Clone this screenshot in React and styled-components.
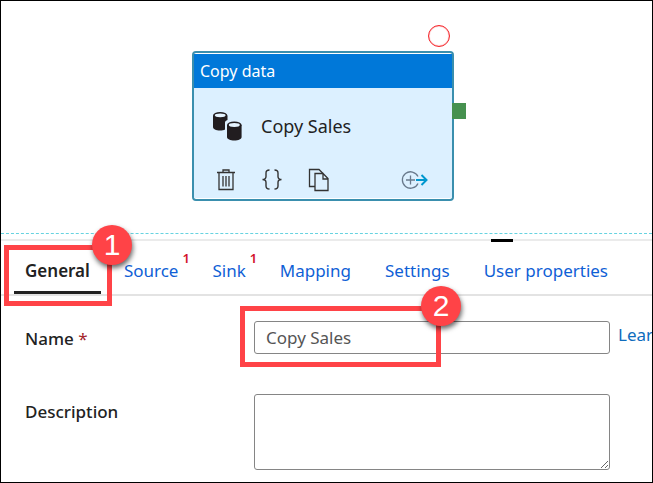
import React from "react";
import styled, { createGlobalStyle } from "styled-components";

const GlobalStyle = createGlobalStyle`
  *, *::before, *::after { box-sizing: border-box; }
  body { margin: 0; background: #fff; }
  button, input, textarea { font: inherit; }
`;

const Page = styled.main`
  display: flex;
  flex-direction: column;
  min-height: 100vh;
  border: 1px solid #000;
  background: #fff;
  color: #222;
  font: 17px/24px "Noto Sans", "Open Sans", sans-serif;
  overflow: hidden;
`;

const Canvas = styled.section`
  position: relative;
  height: 233px;
  border-bottom: 1px dashed #67d3e0;
`;

const Activity = styled.article`
  position: absolute;
  left: 191px;
  top: 50px;
  width: 262px;
  height: 150px;
  display: flex;
  flex-direction: column;
  padding: 1px 0;
  border: 2px solid #3a8fae;
  border-radius: 4px;
  background: #fff;
`;

const ActivityHeader = styled.header`
  padding: 0 6px;
  background: #0078d9;
  color: #fff;
  font-size: 16px;
  line-height: 34px;
`;

const ActivityBody = styled.div`
  flex: 1;
  display: flex;
  flex-direction: column;
  justify-content: space-between;
  padding: 22px 24px 6px 18px;
  background: #dcf0ff;
`;

const ActivityTitle = styled.div`
  display: flex;
  align-items: center;
  gap: 18px;
  height: 32px;
  font-size: 18px;
`;

const ActivityActions = styled.div`
  display: flex;
  align-items: center;
  gap: 25px;
  padding-left: 4px;
`;

const IconButton = styled.button`
  display: flex;
  margin-left: ${(p) => (p.$end ? "auto" : "0")};
  padding: 0;
  border: 0;
  background: none;
  color: #333;
`;

const FailureRing = styled.span`
  position: absolute;
  right: 2px;
  top: -28px;
  width: 22px;
  height: 22px;
  border: 1px solid #f5262b;
  border-radius: 50%;
  box-shadow: inset 0 0 1px #f5262b;
`;

const SuccessPort = styled.span`
  position: absolute;
  left: 100%;
  top: 50px;
  width: 14px;
  height: 16px;
  background: #46914f;
`;

const Splitter = styled.div`
  display: flex;
  justify-content: center;
  height: 2px;
  margin-top: 5px;
  padding-left: 350px;
  background: #ebebeb;
`;

const SplitterHandle = styled.span`
  width: 22px;
  height: 3px;
  background: #000;
`;

const Tabs = styled.nav`
  display: flex;
  gap: 34px;
  height: 55px;
  padding: 0 24px;
  border-bottom: 2px solid #e3e3e3;
`;

const TabItem = styled.div`
  position: relative;
  display: flex;
`;

const Tab = styled.button`
  position: relative;
  padding: 6px 0 0;
  border: 0;
  background: none;
  color: ${(p) => (p.$active ? "#222" : "#0f5fd6")};
  font-weight: ${(p) => (p.$active ? 600 : 400)};
  white-space: nowrap;

  &::after {
    content: "";
    position: absolute;
    inset: auto -11px 0;
    height: 3px;
    background: ${(p) => (p.$active ? "#222" : "transparent")};
  }
`;

const ErrorCount = styled.sup`
  position: absolute;
  left: calc(100% + 4px);
  top: 9px;
  color: #d3122b;
  font-size: 13px;
  font-weight: 600;
  line-height: 16px;
`;

const Callout = styled.div`
  position: absolute;
  z-index: 1;
  left: ${(p) => p.$left}px;
  top: ${(p) => p.$top}px;
  width: ${(p) => p.$width}px;
  height: 61px;
  border: 5px solid #ff4347;
  pointer-events: none;
`;

const CalloutNumber = styled.span`
  position: absolute;
  right: -25px;
  top: -25px;
  width: 40px;
  height: 40px;
  border-radius: 50%;
  background: #ff4347;
  box-shadow: 1px 3px 5px rgba(0, 0, 0, 0.6);
  color: #fff;
  font: 30px/40px "Liberation Sans", Arial, sans-serif;
  text-align: center;
`;

const Form = styled.form`
  display: grid;
  grid-template-columns: 221px minmax(0, 1fr) 34px;
  column-gap: 8px;
  row-gap: 40px;
  padding: 25px 0 12px 24px;
`;

const Label = styled.label`
  padding-top: 6px;
  font-size: 17px;
  font-weight: 500;
`;

const Required = styled.span`
  color: #a4262c;
  font-weight: 400;
`;

const Field = styled.div`
  position: relative;
  display: flex;
`;

const TextInput = styled.input`
  width: 100%;
  height: 33px;
  padding: 0 11px;
  border: 1px solid #858585;
  border-radius: 3px;
  background: #fff;
  color: #555;
`;

const TextArea = styled.textarea`
  width: 100%;
  height: 76px;
  border: 1px solid #858585;
  border-radius: 3px;
  background: #fff;
  resize: vertical;
`;

const LearnLink = styled.a`
  padding-top: 2px;
  color: #0f6cbd;
  text-decoration: none;
  white-space: nowrap;
`;

const DataIcon = () => (
  <svg width="31" height="30" viewBox="0 0 31 30" aria-hidden="true">
    <path d="M1 5v11c0 2 3 3.500 7 3.500 2 0 4-.3 5-1v-7c0-1 1-2 2.500-2.500V5z" fill="#211d20" />
    <ellipse cx="8.200" cy="4.500" rx="7.200" ry="3.500" fill="#211d20" />
    <ellipse cx="8.200" cy="4.300" rx="5.400" ry="1.900" fill="#e5f4ff" />
    <path d="M15 14v12c0 2 3.200 3.500 7.300 3.500s7.300-1.500 7.300-3.500V14z" fill="#211d20" />
    <ellipse cx="22.300" cy="14" rx="7.300" ry="3.500" fill="#211d20" />
    <ellipse cx="22.300" cy="14" rx="5.500" ry="1.900" fill="#e5f4ff" />
  </svg>
);

const TrashIcon = () => (
  <svg width="20" height="24" viewBox="0 0 20 24" fill="none" stroke="currentColor" strokeWidth="1.300" aria-hidden="true">
    <path d="M1 4.500h18M7 4V2h6v2M3 4.500v17h14v-17M7 8v10.500M10 8v10.500M13 8v10.500" />
  </svg>
);

const BracesIcon = () => (
  <svg width="22" height="24" viewBox="0 0 22 24" fill="none" stroke="currentColor" strokeWidth="1.400" aria-hidden="true">
    <path d="M8.500 2C5.500 2 5 3 5 5v3.500C5 10.500 4 11.500 1.500 11.500 4 11.500 5 12.500 5 14.500V18c0 2 .5 3 3.500 3M13.500 2c3 0 3.500 1 3.500 3v3.500c0 2 1 3 3.500 3-2.500 0-3.500 1-3.500 3V18c0 2-.5 3-3.500 3" />
  </svg>
);

const CopyIcon = () => (
  <svg width="22" height="24" viewBox="0 0 22 24" fill="none" stroke="currentColor" strokeWidth="1.300" aria-hidden="true">
    <path d="M7 18.500H1.500v-17H11l4 4" />
    <path d="M7 5.500h8l5 5v12H7zM15 5.500v5.500h5" />
  </svg>
);

const AddOutputIcon = () => (
  <svg width="27" height="20" viewBox="0 0 27 20" fill="none" strokeWidth="1.300" aria-hidden="true">
    <path d="M17 6.500A8.200 8.200 0 1 0 17 13.500M9.500 5.500v9M5 10h9" stroke="#69798c" />
    <path d="M15 10h10.500M20.500 5l5 5-5 5" stroke="#0098cf" strokeWidth="2" />
  </svg>
);

const tabs = [
  { name: "General", active: true, step: 1 },
  { name: "Source", errors: 1 },
  { name: "Sink", errors: 1 },
  { name: "Mapping" },
  { name: "Settings" },
  { name: "User properties" },
];

export default function App() {
  return (
    <>
      <GlobalStyle />
      <Page>
        <Canvas>
          <Activity>
            <FailureRing />
            <SuccessPort />
            <ActivityHeader>Copy data</ActivityHeader>
            <ActivityBody>
              <ActivityTitle>
                <DataIcon />
                Copy Sales
              </ActivityTitle>
              <ActivityActions>
                <IconButton type="button" aria-label="Delete"><TrashIcon /></IconButton>
                <IconButton type="button" aria-label="View code"><BracesIcon /></IconButton>
                <IconButton type="button" aria-label="Clone"><CopyIcon /></IconButton>
                <IconButton type="button" aria-label="Add output" $end><AddOutputIcon /></IconButton>
              </ActivityActions>
            </ActivityBody>
          </Activity>
        </Canvas>
        <Splitter><SplitterHandle /></Splitter>
        <Tabs>
          {tabs.map((tab) => (
            <TabItem key={tab.name}>
              <Tab type="button" $active={tab.active}>{tab.name}</Tab>
              {tab.errors && <ErrorCount>{tab.errors}</ErrorCount>}
              {tab.step && (
                <Callout $left={-21} $top={4} $width={108}>
                  <CalloutNumber>{tab.step}</CalloutNumber>
                </Callout>
              )}
            </TabItem>
          ))}
        </Tabs>
        <Form>
          <Label htmlFor="name">Name <Required>*</Required></Label>
          <Field>
            <TextInput id="name" defaultValue="Copy Sales" required />
            <Callout $left={-14} $top={-15} $width={201}>
              <CalloutNumber>2</CalloutNumber>
            </Callout>
          </Field>
          <LearnLink href="#learn">Lear</LearnLink>
          <Label htmlFor="description">Description</Label>
          <Field>
            <TextArea id="description" />
          </Field>
        </Form>
      </Page>
    </>
  );
}
